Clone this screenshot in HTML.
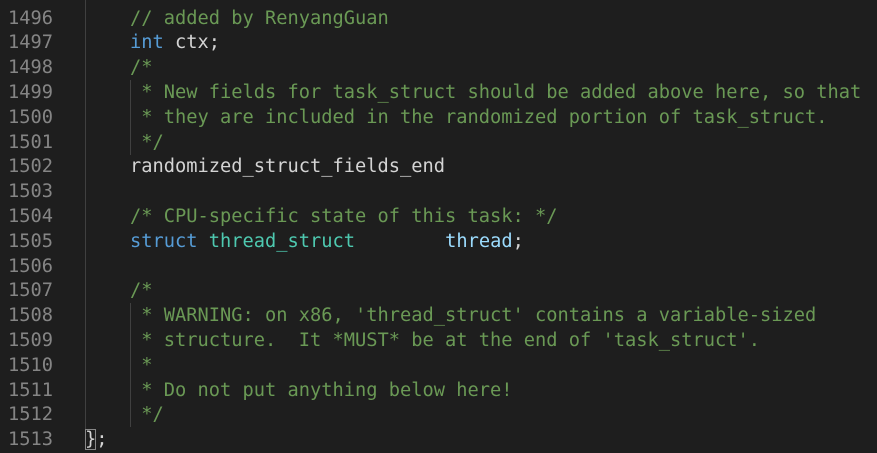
<!DOCTYPE html>
<html><head><style>
body{margin:0;background:#1e1e1e;width:877px;height:445px;overflow:hidden;position:relative;font-family:"DejaVu Sans Mono","Liberation Mono",monospace;font-size:18.7px;}
.ln{position:absolute;left:0;width:53px;text-align:right;color:#858585;}
.c{position:absolute;left:85px;white-space:pre;color:#d4d4d4;}
.l{position:absolute;height:24.8px;line-height:24.8px;}
.cm{color:#6a9955}.kw{color:#569cd6}.ty{color:#4ec9b0}.v{color:#9cdcfe}
.g{position:absolute;width:1px;background:#404040;}
</style></head><body>
<div class="g" style="left:85px;top:0;height:430px"></div>
<div class="g" style="left:130px;top:80px;height:75px"></div>
<div class="g" style="left:130px;top:303px;height:124px"></div>
<div id="w"></div>
<script>
var L=[
['1496','    <span class="cm">// added by RenyangGuan</span>'],
['1497','    <span class="kw">int</span> ctx;'],
['1498','    <span class="cm">/*</span>'],
['1499','<span class="cm">     * New fields for task_struct should be added above here, so that</span>'],
['1500','<span class="cm">     * they are included in the randomized portion of task_struct.</span>'],
['1501','<span class="cm">     */</span>'],
['1502','    randomized_struct_fields_end'],
['1503',''],
['1504','    <span class="cm">/* CPU-specific state of this task: */</span>'],
['1505','    <span class="kw">struct</span> <span class="ty">thread_struct</span>        <span class="v">thread</span>;'],
['1506',''],
['1507','    <span class="cm">/*</span>'],
['1508','<span class="cm">     * WARNING: on x86, \'thread_struct\' contains a variable-sized</span>'],
['1509','<span class="cm">     * structure.  It *MUST* be at the end of \'task_struct\'.</span>'],
['1510','<span class="cm">     *</span>'],
['1511','<span class="cm">     * Do not put anything below here!</span>'],
['1512','<span class="cm">     */</span>'],
['1513','<span style="outline:1px solid #888;outline-offset:-1px">}</span>;']];
var h='';
L.forEach(function(r,i){var t=6.5+24.8*i;
h+='<div class="l ln" style="top:'+t+'px">'+r[0]+'</div><div class="l c" style="top:'+t+'px">'+r[1]+'</div>';});
document.getElementById('w').innerHTML=h;
</script>
</body></html>
